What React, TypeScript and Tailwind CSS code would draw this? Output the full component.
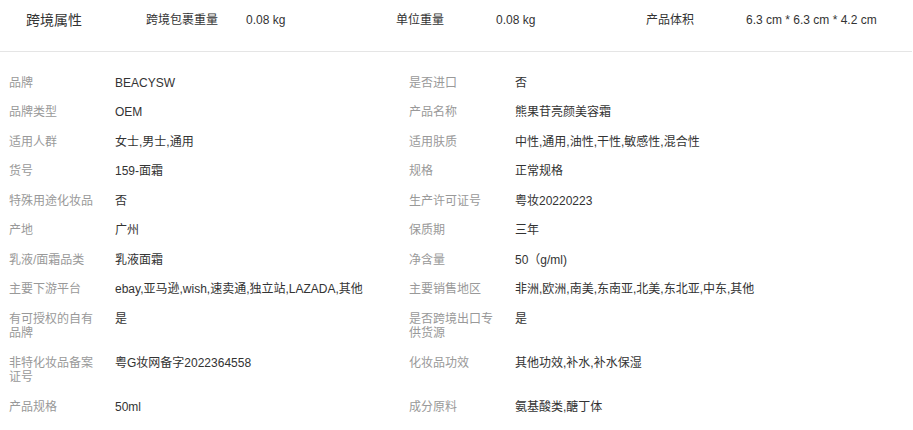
const font = { fontFamily: '"Liberation Sans", Arial, "Noto Sans CJK SC", sans-serif' };

const topAttrs = [
  { label: "跨境包裹重量", value: "0.08 kg" },
  { label: "单位重量", value: "0.08 kg" },
  { label: "产品体积", value: "6.3 cm * 6.3 cm * 4.2 cm" },
];

const attrs: [string, string][] = [
  ["品牌", "BEACYSW"],
  ["是否进口", "否"],
  ["品牌类型", "OEM"],
  ["产品名称", "熊果苷亮颜美容霜"],
  ["适用人群", "女士,男士,通用"],
  ["适用肤质", "中性,通用,油性,干性,敏感性,混合性"],
  ["货号", "159-面霜"],
  ["规格", "正常规格"],
  ["特殊用途化妆品", "否"],
  ["生产许可证号", "粤妆20220223"],
  ["产地", "广州"],
  ["保质期", "三年"],
  ["乳液/面霜品类", "乳液面霜"],
  ["净含量", "50（g/ml)"],
  ["主要下游平台", "ebay,亚马逊,wish,速卖通,独立站,LAZADA,其他"],
  ["主要销售地区", "非洲,欧洲,南美,东南亚,北美,东北亚,中东,其他"],
  ["有可授权的自有品牌", "是"],
  ["是否跨境出口专供货源", "是"],
  ["非特化妆品备案证号", "粤G妆网备字2022364558"],
  ["化妆品功效", "其他功效,补水,补水保湿"],
  ["产品规格", "50ml"],
  ["成分原料", "氨基酸类,醣丁体"],
];

function AttrCell({ label, value }: { label: string; value: string }) {
  return (
    <div className="grid grid-cols-[106px_1fr] py-[7.5px] pl-[9px] text-[12px] leading-[14.5px]">
      <div className="pr-[14px] text-[#999]">{label}</div>
      <div className="text-[#333]">{value}</div>
    </div>
  );
}

export default function App() {
  return (
    <div className="min-h-screen w-[913px] bg-white" style={font}>
      <div className="mr-[1px] flex items-center border-b border-[#e5e5e5] pb-[23px] pl-[26px] pt-[12px] leading-[16px]">
        <div className="w-[120px] shrink-0 text-[14px] text-[#333]">跨境属性</div>
        {topAttrs.map((a) => (
          <div key={a.label} className="flex w-[250px] shrink-0 text-[12px]">
            <div className="w-[100px] shrink-0 text-[#333]">{a.label}</div>
            <div className="text-[#333]">{a.value}</div>
          </div>
        ))}
      </div>
      <div className="grid grid-cols-[400px_1fr] pt-[16px]">
        {attrs.map(([l, v]) => (
          <AttrCell key={l} label={l} value={v} />
        ))}
      </div>
    </div>
  );
}
